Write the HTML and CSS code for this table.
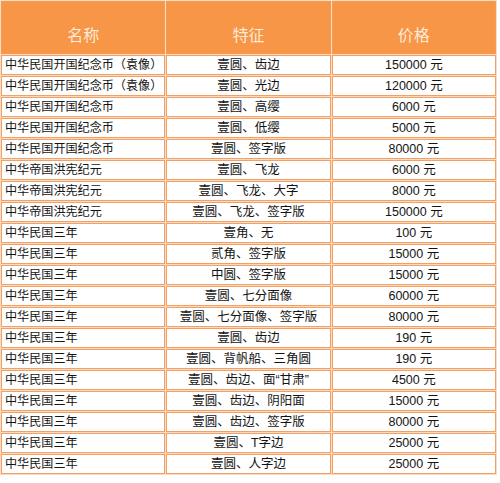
FILE: index.html
```html
<!DOCTYPE html>
<html>
<head>
<meta charset="utf-8">
<link rel="stylesheet" href="styles.css">
</head>
<body>
<table class="price-table">
  <thead>
    <tr><th>名称</th><th>特征</th><th>价格</th></tr>
  </thead>
  <tbody>
    <tr><td class="name">中华民国开国纪念币（袁像）</td><td>壹圆、齿边</td><td>150000 元</td></tr>
    <tr><td class="name">中华民国开国纪念币（袁像）</td><td>壹圆、光边</td><td>120000 元</td></tr>
    <tr><td class="name">中华民国开国纪念币</td><td>壹圆、高缨</td><td>6000 元</td></tr>
    <tr><td class="name">中华民国开国纪念币</td><td>壹圆、低缨</td><td>5000 元</td></tr>
    <tr><td class="name">中华民国开国纪念币</td><td>壹圆、签字版</td><td>80000 元</td></tr>
    <tr><td class="name">中华帝国洪宪纪元</td><td>壹圆、飞龙</td><td>6000 元</td></tr>
    <tr><td class="name">中华帝国洪宪纪元</td><td>壹圆、飞龙、大字</td><td>8000 元</td></tr>
    <tr><td class="name">中华帝国洪宪纪元</td><td>壹圆、飞龙、签字版</td><td>150000 元</td></tr>
    <tr><td class="name">中华民国三年</td><td>壹角、无</td><td>100 元</td></tr>
    <tr><td class="name">中华民国三年</td><td>贰角、签字版</td><td>15000 元</td></tr>
    <tr><td class="name">中华民国三年</td><td>中圆、签字版</td><td>15000 元</td></tr>
    <tr><td class="name">中华民国三年</td><td>壹圆、七分面像</td><td>60000 元</td></tr>
    <tr><td class="name">中华民国三年</td><td>壹圆、七分面像、签字版</td><td>80000 元</td></tr>
    <tr><td class="name">中华民国三年</td><td>壹圆、齿边</td><td>190 元</td></tr>
    <tr><td class="name">中华民国三年</td><td>壹圆、背帆船、三角圆</td><td>190 元</td></tr>
    <tr><td class="name">中华民国三年</td><td>壹圆、齿边、面“甘肃”</td><td>4500 元</td></tr>
    <tr><td class="name">中华民国三年</td><td>壹圆、齿边、阴阳面</td><td>15000 元</td></tr>
    <tr><td class="name">中华民国三年</td><td>壹圆、齿边、签字版</td><td>80000 元</td></tr>
    <tr><td class="name">中华民国三年</td><td>壹圆、T字边</td><td>25000 元</td></tr>
    <tr><td class="name">中华民国三年</td><td>壹圆、人字边</td><td>25000 元</td></tr>
  </tbody>
</table>
</body>
</html>
```
FILE: styles.css
```css
html, body {
  margin: 0;
  padding: 0;
  background: #ffffff;
}
.price-table {
  width: 497px;
  border-collapse: separate;
  border-spacing: 1px;
  background: #fcdcc0;
  table-layout: fixed;
  font-family: "Liberation Sans", "Noto Sans CJK SC", sans-serif;
  font-size: 12.5px;
  color: #141414;
}
.price-table th {
  background: #f79646;
  color: #feead8;
  font-weight: normal;
  font-size: 16px;
  height: 53px;
  padding: 12px 0 0 0;
  box-sizing: border-box;
  border: 1px solid #f59a55;
  text-align: center;
  vertical-align: middle;
}
.price-table td {
  background: #ffffff;
  border: 1px solid #f2a066;
  height: 20px;
  box-sizing: border-box;
  padding: 0 2px;
  text-align: center;
  vertical-align: middle;
  line-height: 18px;
  white-space: nowrap;
  overflow: hidden;
}
.price-table td.name {
  text-align: left;
  font-size: 12.1px;
  padding: 0 0 0 3px;
}
```
